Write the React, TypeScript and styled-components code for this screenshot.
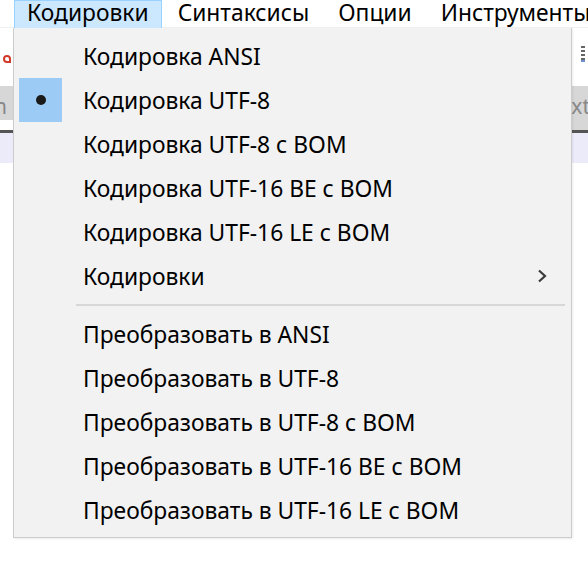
import React from 'react';
import styled, { createGlobalStyle } from 'styled-components';

const GlobalStyle = createGlobalStyle`
  html, body {
    margin: 0;
    padding: 0;
    background: #ffffff;
  }
  body {
    font-family: "Noto Sans", "Open Sans", "DejaVu Sans", sans-serif;
    -webkit-font-smoothing: antialiased;
  }
`;

const Window = styled.div`
  position: relative;
  width: 588px;
  height: 570px;
  overflow: hidden;
  background: #ffffff;
`;

const MenuBar = styled.div`
  display: flex;
  height: 28px;
  padding-left: 14px;
  border-bottom: 1px solid #f0f0f0;
  box-sizing: border-box;
  white-space: nowrap;
`;

const BarItem = styled.div<{ active?: boolean }>`
  padding: 0 12px;
  margin-right: 3px;
  font-size: 22.8px;
  line-height: 23px;
  color: #000;
  height: 28px;
  box-sizing: border-box;
  background: ${({ active }) => (active ? '#cce8ff' : 'transparent')};
  border: 1px solid ${({ active }) => (active ? '#99d1ff' : 'transparent')};
  border-bottom: none;
`;

const Content = styled.div`
  display: flex;
  flex-direction: column;
`;

const Toolbar = styled.div`
  height: 58px;
  display: flex;
  justify-content: space-between;
  align-items: center;
  padding: 0 3px;
`;

const RedMark = styled.div`
  width: 8px;
  height: 8px;
  margin-top: 4px;
  border-radius: 4px 4px 0 4px;
  border: 2px solid #d23a2a;
  box-sizing: border-box;
`;

const Dots = styled.div`
  width: 4px;
  height: 14px;
  margin-top: -6px;
  background: repeating-linear-gradient(#666 0 2px, transparent 2px 4px);
  border-bottom: 2px solid #6b8fd6;
`;

const TabBar = styled.div`
  height: 44px;
  display: flex;
  justify-content: space-between;
  background: linear-gradient(#ffffff 0 0) left bottom / 14px 10px no-repeat, #d7d7d7;
  color: #888;
  font-size: 21px;
  line-height: 40px;
  overflow: hidden;
`;

const TabText = styled.span`
  margin-left: -6px;
`;

const TabTextRight = styled.span`
  margin-right: -2px;
`;

const Rule = styled.div`
  height: 3px;
  background: #555;
`;

const Lavender = styled.div`
  height: 30px;
  background: #ebebfa;
`;

const Dropdown = styled.div`
  position: absolute;
  left: 13px;
  top: 28px;
  width: 559px;
  height: 510px;
  box-sizing: border-box;
  background: #f2f2f2;
  border: 1px solid #cccccc;
  border-top: none;
  padding: 6px 6px 5px 5px;
  display: flex;
  flex-direction: column;
  box-shadow: 1px 1px 2px rgba(0, 0, 0, 0.08);
`;

const Item = styled.div`
  display: flex;
  align-items: center;
  height: 44px;
  flex-shrink: 0;
  font-size: 22.8px;
  color: #000;
  white-space: nowrap;
`;

const Check = styled.div<{ checked?: boolean }>`
  width: 43px;
  height: 44px;
  margin-right: 21px;
  display: flex;
  align-items: center;
  justify-content: center;
  background: ${({ checked }) => (checked ? '#9ccbf5' : 'transparent')};
`;

const Dot = styled.div`
  width: 10px;
  height: 10px;
  border-radius: 50%;
  background: #1a1a1a;
`;

const Label = styled.span`
  flex: 1;
`;

const Arrow = styled.svg`
  width: 12px;
  height: 16px;
  margin-right: 17px;
`;

const Separator = styled.div`
  height: 14px;
  flex-shrink: 0;
  display: flex;
  align-items: center;
  padding-left: 57px;
  &::after {
    content: '';
    flex: 1;
    height: 2px;
    background: #d7d7d7;
  }
`;

const encodings = [
  'Кодировка ANSI',
  'Кодировка UTF-8',
  'Кодировка UTF-8 с BOM',
  'Кодировка UTF-16 BE с BOM',
  'Кодировка UTF-16 LE с BOM',
];

const conversions = [
  'Преобразовать в ANSI',
  'Преобразовать в UTF-8',
  'Преобразовать в UTF-8 с BOM',
  'Преобразовать в UTF-16 BE с BOM',
  'Преобразовать в UTF-16 LE с BOM',
];

export default function App() {
  return (
    <Window>
      <GlobalStyle />
      <MenuBar>
        <BarItem active>Кодировки</BarItem>
        <BarItem>Синтаксисы</BarItem>
        <BarItem>Опции</BarItem>
        <BarItem>Инструменты</BarItem>
      </MenuBar>
      <Content>
        <Toolbar>
          <RedMark />
          <Dots />
        </Toolbar>
        <TabBar>
          <TabText>n</TabText>
          <TabTextRight>xt</TabTextRight>
        </TabBar>
        <Rule />
        <Lavender />
      </Content>
      <Dropdown>
        {encodings.map((label, i) => (
          <Item key={label}>
            <Check checked={i === 1}>{i === 1 && <Dot />}</Check>
            <Label>{label}</Label>
          </Item>
        ))}
        <Item>
          <Check />
          <Label>Кодировки</Label>
          <Arrow viewBox="0 0 12 16">
            <path d="M3 2.5 L9 8 L3 13.5" fill="none" stroke="#3a3a3a" strokeWidth="2.2" />
          </Arrow>
        </Item>
        <Separator />
        {conversions.map((label) => (
          <Item key={label}>
            <Check />
            <Label>{label}</Label>
          </Item>
        ))}
      </Dropdown>
    </Window>
  );
}
